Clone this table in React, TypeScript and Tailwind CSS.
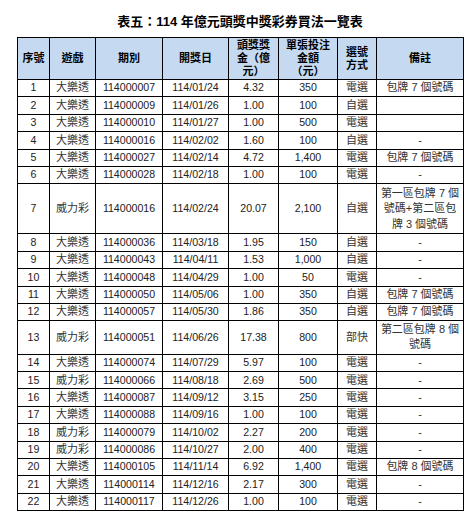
import { ReactElement, ReactNode } from 'react';

// 資料列：序號、遊戲、期別、開獎日、頭獎金、投注金額、選號方式、備註
type Row = {
  no: number;
  game: string;
  term: string;
  date: string;
  prize: string;
  bet: string;
  mode: string;
  note: ReactNode;
  h?: string;
};

const rows: Row[] = [
  { no: 1, game: '大樂透', term: '114000007', date: '114/01/24', prize: '4.32', bet: '350', mode: '電選', note: '包牌 7 個號碼' },
  { no: 2, game: '大樂透', term: '114000009', date: '114/01/26', prize: '1.00', bet: '100', mode: '自選', note: '' },
  { no: 3, game: '大樂透', term: '114000010', date: '114/01/27', prize: '1.00', bet: '500', mode: '電選', note: '' },
  { no: 4, game: '大樂透', term: '114000016', date: '114/02/02', prize: '1.60', bet: '100', mode: '自選', note: '-' },
  { no: 5, game: '大樂透', term: '114000027', date: '114/02/14', prize: '4.72', bet: '1,400', mode: '電選', note: '包牌 7 個號碼' },
  { no: 6, game: '大樂透', term: '114000028', date: '114/02/18', prize: '1.00', bet: '100', mode: '電選', note: '-' },
  {
    no: 7, game: '威力彩', term: '114000016', date: '114/02/24', prize: '20.07', bet: '2,100', mode: '自選',
    note: (<>第一區包牌 7 個<br />號碼+第二區包<br />牌 3 個號碼</>),
    h: 'h-[50px]',
  },
  { no: 8, game: '大樂透', term: '114000036', date: '114/03/18', prize: '1.95', bet: '150', mode: '自選', note: '-' },
  { no: 9, game: '大樂透', term: '114000043', date: '114/04/11', prize: '1.53', bet: '1,000', mode: '自選', note: '-' },
  { no: 10, game: '大樂透', term: '114000048', date: '114/04/29', prize: '1.00', bet: '50', mode: '電選', note: '-' },
  { no: 11, game: '大樂透', term: '114000050', date: '114/05/06', prize: '1.00', bet: '350', mode: '自選', note: '包牌 7 個號碼' },
  { no: 12, game: '大樂透', term: '114000057', date: '114/05/30', prize: '1.86', bet: '350', mode: '自選', note: '包牌 7 個號碼' },
  {
    no: 13, game: '威力彩', term: '114000051', date: '114/06/26', prize: '17.38', bet: '800', mode: '部快',
    note: (<>第二區包牌 8 個<br />號碼</>),
    h: 'h-[33.4px]',
  },
  { no: 14, game: '大樂透', term: '114000074', date: '114/07/29', prize: '5.97', bet: '100', mode: '電選', note: '-' },
  { no: 15, game: '威力彩', term: '114000066', date: '114/08/18', prize: '2.69', bet: '500', mode: '電選', note: '-' },
  { no: 16, game: '大樂透', term: '114000087', date: '114/09/12', prize: '3.15', bet: '250', mode: '電選', note: '-' },
  { no: 17, game: '大樂透', term: '114000088', date: '114/09/16', prize: '1.00', bet: '100', mode: '電選', note: '-' },
  { no: 18, game: '威力彩', term: '114000079', date: '114/10/02', prize: '2.27', bet: '200', mode: '電選', note: '-' },
  { no: 19, game: '威力彩', term: '114000086', date: '114/10/27', prize: '2.00', bet: '400', mode: '電選', note: '-' },
  { no: 20, game: '大樂透', term: '114000105', date: '114/11/14', prize: '6.92', bet: '1,400', mode: '電選', note: '包牌 8 個號碼' },
  { no: 21, game: '大樂透', term: '114000114', date: '114/12/16', prize: '2.17', bet: '300', mode: '電選', note: '-' },
  { no: 22, game: '大樂透', term: '114000117', date: '114/12/26', prize: '1.00', bet: '100', mode: '電選', note: '-' },
];

const th = 'border border-black bg-[#c5d9f1] font-bold text-[11px] leading-[13px] text-center align-middle p-0';
const td = 'border border-black text-center align-middle p-0 leading-[15.5px]';
const num = 'text-[10.6px] text-[#222]';
const cjk = 'text-[11px] text-[#333]';

const App = (): ReactElement => {
  return (
    <div
      className="w-[470px] h-[526px] bg-white overflow-hidden"
      style={{ fontFamily: "'Liberation Sans', 'Noto Sans CJK TC', sans-serif" }}
    >
      {/* 標題 */}
      <div className="ml-[17px] w-[446px] pt-[13px] h-[37px] text-center text-[13px] font-bold leading-[18px] text-black">
        表五：114 年億元頭獎中獎彩券買法一覽表
      </div>

      <table className="ml-[17px] w-[446px] table-fixed border-collapse">
        <colgroup>
          <col className="w-[32px]" />
          <col className="w-[46px]" />
          <col className="w-[67px]" />
          <col className="w-[66px]" />
          <col className="w-[50px]" />
          <col className="w-[59px]" />
          <col className="w-[39px]" />
          <col className="w-[87px]" />
        </colgroup>
        <thead>
          <tr className="h-[42px]">
            <th className={th}>序號</th>
            <th className={th}>遊戲</th>
            <th className={th}>期別</th>
            <th className={th}>開獎日</th>
            <th className={th}>頭獎獎<br />金（億<br />元）</th>
            <th className={th}>單張投注<br />金額<br />（元）</th>
            <th className={th}>選號<br />方式</th>
            <th className={th}>備註</th>
          </tr>
        </thead>
        <tbody>
          {rows.map((r) => (
            <tr key={r.no} className={r.h ?? 'h-[17.4px]'}>
              <td className={`${td} ${num}`}>{r.no}</td>
              <td className={`${td} ${cjk}`}>{r.game}</td>
              <td className={`${td} ${num}`}>{r.term}</td>
              <td className={`${td} ${num}`}>{r.date}</td>
              <td className={`${td} ${num}`}>{r.prize}</td>
              <td className={`${td} ${num}`}>{r.bet}</td>
              <td className={`${td} ${cjk}`}>{r.mode}</td>
              <td className={`${td} ${cjk}`}>{r.note}</td>
            </tr>
          ))}
        </tbody>
      </table>
    </div>
  );
};

export default App;
